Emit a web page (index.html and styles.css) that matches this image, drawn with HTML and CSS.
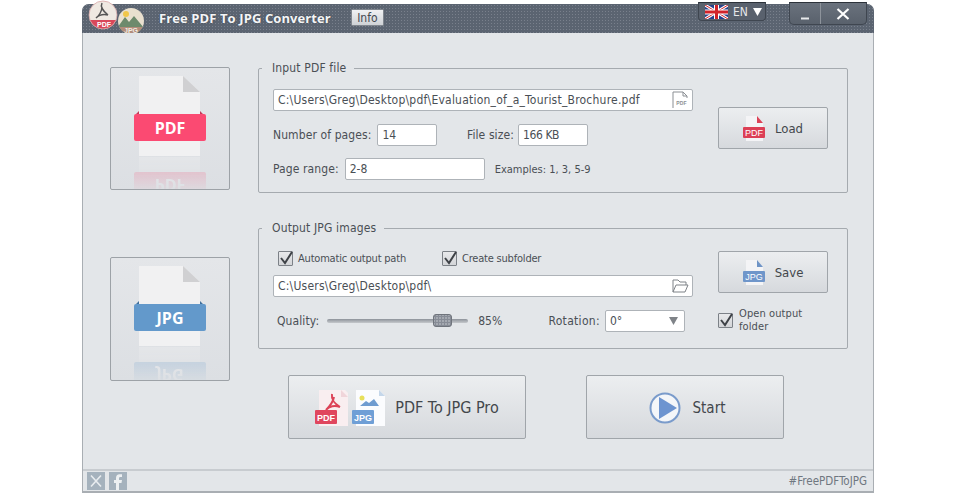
FILE: index.html
```html
<!DOCTYPE html>
<html lang="en">
<head>
<meta charset="utf-8">
<title>Free PDF To JPG Converter</title>
<link rel="stylesheet" href="styles.css">
</head>
<body>
<div class="window">
  <header class="titlebar">
    <svg class="logo" width="60" height="33" viewBox="0 0 60 33">
      <defs>
        <clipPath id="jpgDisc"><circle cx="43" cy="21" r="13"/></clipPath>
        <clipPath id="pdfDisc"><circle cx="15" cy="15" r="14"/></clipPath>
      </defs>
      <g clip-path="url(#jpgDisc)">
        <rect x="30" y="8" width="26" height="26" fill="#e9e0cf"/>
        <path d="M29 28l8-11 4 5 5-6 10 12v6H29z" fill="#6d8a6c"/>
        <circle cx="38" cy="14" r="3" fill="#f0c64a"/>
        <rect x="30" y="27" width="26" height="7" fill="#b28c7a"/>
        <text x="43" y="33" class="logo-jpg">JPG</text>
      </g>
      <circle cx="15" cy="15" r="14" fill="#efe9e2"/>
      <g clip-path="url(#pdfDisc)">
        <rect x="0" y="20" width="30" height="10" fill="#d9475a"/>
        <text x="16" y="27" class="logo-pdf">PDF</text>
      </g>
      <path d="M14 3c-2 4 1 8 6 12M20 15c-4-1-9 0-12 3M8 18c3-2 6-7 6-11" fill="none" stroke="#555" stroke-width="1.500"/>
      <circle cx="15" cy="15" r="14" fill="none" stroke="#d8a8a8" stroke-width=".8"/>
    </svg>
    <h1 class="app-title">Free PDF To JPG Converter</h1>
    <button class="info-btn">Info</button>
    <div class="lang">
      <svg width="23" height="14" viewBox="0 0 23 14">
        <rect width="23" height="14" fill="#27408b"/>
        <path d="M0 0l23 14M23 0L0 14" stroke="#fff" stroke-width="3"/>
        <path d="M0 0l23 14M23 0L0 14" stroke="#d2232a" stroke-width="1"/>
        <path d="M11.5 0v14M0 7h23" stroke="#fff" stroke-width="5"/>
        <path d="M11.5 0v14M0 7h23" stroke="#d2232a" stroke-width="3"/>
      </svg>
      <span>EN</span>
      <svg width="9" height="8" viewBox="0 0 9 8"><path d="M0 0h9L4.500 8z" fill="#fff"/></svg>
    </div>
    <div class="win-controls">
      <div class="win-btn">
        <svg width="12" height="12" viewBox="0 0 12 12"><path d="M2 10.500h8" stroke="#e8eaec" stroke-width="2"/></svg>
      </div>
      <div class="win-btn win-close">
        <svg width="14" height="12" viewBox="0 0 14 12"><path d="M1.500 1l11 10M12.500 1l-11 10" stroke="#fff" stroke-width="2.200"/></svg>
      </div>
    </div>
  </header>

  <main class="main">
    <div class="tiles">
      <div class="tile tile-first">
        <svg width="118" height="121" viewBox="0 0 118 121">
          <defs>
            <linearGradient id="fadeA" x1="0" y1="89" x2="0" y2="121" gradientUnits="userSpaceOnUse">
              <stop offset="0" stop-color="#fff" stop-opacity=".32"/>
              <stop offset="1" stop-color="#fff" stop-opacity=".04"/>
            </linearGradient>
            <mask id="maskA" maskUnits="userSpaceOnUse" x="0" y="89" width="118" height="32"><rect y="89" width="118" height="32" fill="url(#fadeA)"/></mask>
            <g id="docA">
              <path d="M28 8h44l17 16v64H28z" fill="#f1f1f2"/>
              <path d="M72 8l17 16H72z" fill="#d0d0d2"/>
              <path d="M25 46l3-3v5zM92 46l-3-3v5z" fill="#c23a58"/>
              <rect x="23" y="46" width="72" height="27" rx="2" fill="#fb4a72"/>
              <text x="59" y="66" class="tile-label">PDF</text>
            </g>
          </defs>
          <use href="#docA"/>
          <g mask="url(#maskA)"><use href="#docA" transform="translate(0 177) scale(1 -1)"/></g>
        </svg>
      </div>
      <div class="tile tile-second">
        <svg width="118" height="122" viewBox="0 0 118 122">
          <defs>
            <linearGradient id="fadeB" x1="0" y1="89" x2="0" y2="122" gradientUnits="userSpaceOnUse">
              <stop offset="0" stop-color="#fff" stop-opacity=".32"/>
              <stop offset="1" stop-color="#fff" stop-opacity=".04"/>
            </linearGradient>
            <mask id="maskB" maskUnits="userSpaceOnUse" x="0" y="89" width="118" height="33"><rect y="89" width="118" height="33" fill="url(#fadeB)"/></mask>
            <g id="docB">
              <path d="M28 8h44l17 16v64H28z" fill="#f1f1f2"/>
              <path d="M72 8l17 16H72z" fill="#d0d0d2"/>
              <path d="M25 46l3-3v5zM92 46l-3-3v5z" fill="#3f6f9c"/>
              <rect x="23" y="46" width="72" height="27" rx="2" fill="#6399cb"/>
              <text x="59" y="66" class="tile-label">JPG</text>
            </g>
          </defs>
          <use href="#docB"/>
          <g mask="url(#maskB)"><use href="#docB" transform="translate(0 177) scale(1 -1)"/></g>
        </svg>
      </div>
    </div>

    <div class="content">
      <fieldset class="group group-input">
        <legend>Input PDF file</legend>
        <div class="group-body">
          <div class="form">
            <div class="field field-wide">
              <span class="field-text">C:\Users\Greg\Desktop\pdf\Evaluation_of_a_Tourist_Brochure.pdf</span>
              <svg width="17" height="18" viewBox="0 0 17 18"><path d="M1 17V1h10l4 4v2M11 1v4h4" fill="none" stroke="#8b8f94"/><text x="9.500" y="14" class="mini-pdf">PDF</text></svg>
            </div>
            <div class="form-row row-stats">
              <span class="lbl">Number of pages:</span>
              <div class="field field-pages">14</div>
              <span class="lbl lbl-size">File size:</span>
              <div class="field field-size">166 KB</div>
            </div>
            <div class="form-row row-range">
              <span class="lbl">Page range:</span>
              <div class="field field-range">2-8</div>
              <span class="hint">Examples: 1, 3, 5-9</span>
            </div>
          </div>
          <button class="btn btn-side btn-load">
            <svg width="22" height="25" viewBox="0 0 22 25"><path d="M3 0h11l6 7v18H3z" fill="#f4f4f6"/><path d="M14 0l6 7h-6z" fill="#dc4257"/><rect y="11" width="22" height="11" rx="1" fill="#dc3f55"/><text x="11" y="20" class="mini-band">PDF</text></svg>
            <span>Load</span>
          </button>
        </div>
      </fieldset>

      <fieldset class="group group-output">
        <legend>Output JPG images</legend>
        <div class="group-body">
          <div class="form">
            <div class="form-row row-checks">
              <span class="check"><svg width="15" height="15" viewBox="0 0 15 15"><path d="M3 7l4 5 7-11" fill="none" stroke="#3e4247" stroke-width="2"/></svg></span>
              <span class="lbl">Automatic output path</span>
              <span class="check check-second"><svg width="15" height="15" viewBox="0 0 15 15"><path d="M3 7l4 5 7-11" fill="none" stroke="#3e4247" stroke-width="2"/></svg></span>
              <span class="lbl">Create subfolder</span>
            </div>
            <div class="field field-wide">
              <span class="field-text">C:\Users\Greg\Desktop\pdf\</span>
              <svg width="17" height="14" viewBox="0 0 17 14"><path d="M1 13V1h5l2 2h6v3M1 13l3-7h12l-3 7z" fill="none" stroke="#7f8388"/></svg>
            </div>
            <div class="form-row row-quality">
              <span class="lbl">Quality:</span>
              <div class="slider"><div class="slider-thumb"></div></div>
              <span class="lbl pct">85%</span>
              <span class="lbl lbl-rotation">Rotation:</span>
              <div class="field field-rotation"><span>0°</span><svg width="9" height="8" viewBox="0 0 9 8"><path d="M0 0h9L4.500 8z" fill="#7f8388"/></svg></div>
            </div>
          </div>
          <div class="side">
            <button class="btn btn-side btn-save">
              <svg width="22" height="25" viewBox="0 0 22 25"><path d="M3 0h11l6 7v18H3z" fill="#f4f4f6"/><path d="M14 0l6 7h-6z" fill="#6f94c6"/><rect y="11" width="22" height="11" rx="1" fill="#6f96ca"/><text x="11" y="20" class="mini-band">JPG</text></svg>
              <span>Save</span>
            </button>
            <div class="open-folder">
              <span class="check"><svg width="15" height="15" viewBox="0 0 15 15"><path d="M3 7l4 5 7-11" fill="none" stroke="#3e4247" stroke-width="2"/></svg></span>
              <span class="lbl">Open output folder</span>
            </div>
          </div>
        </div>
      </fieldset>

      <div class="actions">
        <button class="btn btn-pro">
          <svg width="72" height="38" viewBox="0 0 72 38">
            <path d="M4 1h26l3 3v33H4z" fill="#f9eef0"/>
            <path d="M26 1l7 7h-7z" fill="#f0d5da"/>
            <path d="M17 5c-1 5 3 10 8 13M25 18c-5-2-11-1-14 3M11 21c3-3 7-8 8-13" fill="none" stroke="#dc4257" stroke-width="2"/>
            <rect y="21" width="22" height="14" rx="1" fill="#e0465e"/>
            <text x="11" y="32" class="mini-band pro-band">PDF</text>
            <path d="M41 1h23l6 6v30H41z" fill="#fbfcfe"/>
            <path d="M64 1l6 6h-6z" fill="#c5d7ea"/>
            <circle cx="47" cy="9" r="2.500" fill="#e7df5a"/>
            <path d="M45 17l6-5 3 2 5-4 5 7z" fill="#6f9cd0"/>
            <rect x="37" y="21" width="22" height="14" rx="1" fill="#6f9fd6"/>
            <text x="48" y="32" class="mini-band pro-band">JPG</text>
          </svg>
          <span>PDF To JPG Pro</span>
        </button>
        <button class="btn btn-start">
          <svg width="32" height="32" viewBox="0 0 32 32"><circle cx="16" cy="16" r="14.500" fill="#f4f6f9" stroke="#7a9bcb" stroke-width="2"/><path d="M10 5l18 11-18 11z" fill="#6d94d0"/></svg>
          <span>Start</span>
        </button>
      </div>
    </div>
  </main>

  <footer class="footer">
    <div class="social">
      <svg class="social-icon" width="18" height="18" viewBox="0 0 18 18"><rect width="18" height="18" fill="#a5b2bd"/><path d="M4 3.500l10 11M14 3.500l-10 11" stroke="#e8ecef" stroke-width="1.600"/></svg>
      <svg class="social-icon" width="18" height="18" viewBox="0 0 18 18"><rect width="18" height="18" fill="#a5b2bd"/><path d="M10 18v-7h2.500l.5-3h-3V6.500c0-1 .4-1.500 1.500-1.500H13V2.300h-2.500C8.300 2.300 7 3.700 7 6v2H5v3h2v7z" fill="#edf0f2"/></svg>
    </div>
    <span class="hashtag">#FreePDFToJPG</span>
  </footer>
</div>
</body>
</html>
```
FILE: styles.css
```css
* { box-sizing: border-box; }
html, body { margin: 0; padding: 0; background: #fff; }
body {
  font-family: "DejaVu Sans", "Liberation Sans", sans-serif;
  font-stretch: condensed;
  font-size: 12px;
  color: #4a4f55;
  height: 498px;
  overflow: hidden;
}
.window {
  margin: 4px 0 0 82px;
  width: 792px;
  height: 489px;
  display: flex;
  flex-direction: column;
  background: #e3e6e9;
  border: 1px solid #a9aeb3;
  border-top: 0;
  border-radius: 7px 7px 0 0;
}
.titlebar {
  height: 29px;
  margin: 0 -1px;
  display: flex;
  align-items: center;
  border-radius: 7px 7px 0 0;
  background-color: #5b6471;
  background-image: radial-gradient(circle at 1.500px 1.500px, #79808c .8px, transparent 1px);
  background-size: 3px 3px;
}
.logo { margin: -4px 0 0 6px; align-self: flex-start; flex: none; }
.logo-jpg { font: bold 7px "Liberation Sans", sans-serif; fill: #f1ece4; text-anchor: middle; }
.logo-pdf { font: bold 7px "Liberation Sans", sans-serif; fill: #fff; text-anchor: middle; }
.app-title {
  margin: -2px 0 0 11px;
  font: bold 13px "Open Sans", "Liberation Sans", sans-serif;
  letter-spacing: .1px;
  color: #f4f5f6;
  text-shadow: 0 0 2px #3c434d;
  white-space: nowrap;
}
.info-btn {
  margin: -2px 0 0 20px;
  width: 33px;
  height: 17px;
  padding: 0;
  font: inherit;
  font-stretch: condensed;
  font-size: 12px;
  color: #454a50;
  background: linear-gradient(#f0f1f3, #cfd2d6);
  border: 1px solid #80868e;
  border-radius: 1px;
}
.lang {
  align-self: flex-start;
  margin: -2px 0 0 314px;
  width: 68px;
  height: 19px;
  display: flex;
  align-items: center;
  gap: 5px;
  padding-left: 6px;
  color: #e6e8ea;
  background: #59616d;
  border: 1px solid #3f4650;
  border-top-color: #2c323a;
  border-radius: 0 0 4px 4px;
  font-size: 12px;
}
.win-controls {
  align-self: flex-start;
  margin: -2px 0 0 23px;
  width: 78px;
  height: 23px;
  display: flex;
  background: linear-gradient(#6a727d, #59616c);
  border: 1px solid #3f4650;
  border-top-color: #2c323a;
  border-radius: 0 0 5px 5px;
}
.win-btn { width: 31px; display: flex; align-items: center; justify-content: center; border-right: 1px solid #8d939b; }
.win-close { flex: 1; border-right: 0; }

.main { flex: 1; display: flex; gap: 28px; padding-left: 27px; min-height: 0; }
.tiles { display: flex; flex-direction: column; width: 120px; }
.tile {
  width: 120px;
  height: 123px;
  background: linear-gradient(#e4e6e9, #dcdfe3);
  border: 1px solid #9da2a7;
  border-radius: 2px;
  overflow: hidden;
}
.tile svg { display: block; }
.tile-first { margin-top: 34px; }
.tile-second { margin-top: 67px; height: 124px; }
.tile-label { font: bold 16px "Open Sans", "Liberation Sans", sans-serif; fill: #fff; text-anchor: middle; }

.content { width: 590px; display: flex; flex-direction: column; padding-top: 27px; }
.group {
  margin: 0;
  padding: 0;
  min-width: 0;
  border: 1px solid #a5aaaf;
  border-radius: 2px;
}
.group legend {
  margin-left: 3px;
  padding: 0 8px 0 10px;
  font-size: 12px;
  line-height: 16px;
  letter-spacing: .15px;
  color: #4a4f55;
}
.group-input { height: 133px; }
.group-output { height: 129px; margin-top: 27px; }
.group-body { display: flex; gap: 25px; padding: 13px 0 0 14px; }
.group-output .group-body { padding-top: 15px; }
.form { width: 420px; display: flex; flex-direction: column; }
.form-row { display: flex; align-items: center; }
.field {
  height: 22px;
  display: flex;
  align-items: center;
  padding-left: 4px;
  background: #fff;
  border: 1px solid #aeb3b8;
  border-radius: 2px;
  color: #4a4f55;
  white-space: nowrap;
}
.field-wide { width: 420px; justify-content: space-between; padding-right: 3px; letter-spacing: .22px; }
.field-wide svg { flex: none; }
.row-stats { margin-top: 13px; }
.row-range { margin-top: 12px; }
.field-pages { width: 60px; margin-left: 6px; }
.lbl-size { margin-left: 29.500px; }
.field-size { width: 70px; margin-left: 4px; letter-spacing: -.4px; }
.field-range { width: 140px; margin-left: 6px; }
.hint { margin-left: 10px; font-size: 11px; }
.lbl { white-space: nowrap; letter-spacing: .1px; }
.mini-pdf { font: bold 5px "Liberation Sans", sans-serif; fill: #8b8f94; text-anchor: middle; }
.mini-band { font: 9px "Liberation Sans", sans-serif; fill: #fff; text-anchor: middle; }
.pro-band { font-weight: bold; }

.row-checks { height: 14px; padding-left: 5px; }
.check {
  width: 15px;
  height: 15px;
  flex: none;
  background: linear-gradient(#e8e9eb, #d3d5d8);
  border: 1px solid #7c8187;
  border-radius: 1px;
}
.check svg { display: block; margin: -1px; }
.row-checks .lbl { margin-left: 5px; font-size: 11px; letter-spacing: -.2px; }
.check-second { margin-left: 36px; }
.group-output .field-wide { margin-top: 10px; }
.row-quality { margin-top: 13px; padding-left: 4px; }
.slider {
  width: 141px;
  height: 4px;
  margin-left: 8px;
  background: linear-gradient(#8d929a, #c5c8cc);
  border-radius: 2px;
  position: relative;
}
.slider-thumb {
  position: absolute;
  left: 106px;
  top: -5px;
  width: 19px;
  height: 13px;
  border-radius: 3px;
  border: 1px solid #6f747c;
  background-color: #878c96;
  background-image: radial-gradient(circle at 1px 1px, #e6e8ea .5px, transparent .8px);
  background-size: 3px 3px;
  background-position: 2px 2px;
}
.pct { margin-left: 10px; }
.lbl-rotation { margin-left: 46px; letter-spacing: .3px; }
.field-rotation { width: 80px; margin-left: 5px; justify-content: space-between; padding-right: 6px; }

.side { width: 110px; display: flex; flex-direction: column; }
.btn {
  display: flex;
  align-items: center;
  justify-content: center;
  padding: 0;
  font: inherit;
  font-stretch: condensed;
  color: #43474c;
  background: linear-gradient(#eceef0, #d6d9dd);
  border: 1px solid #a0a5aa;
  border-radius: 2px;
}
.btn-side { width: 110px; height: 42px; gap: 10px; font-size: 13px; }
.btn-load { margin-top: 18px; }
.open-folder { display: flex; gap: 6px; margin-top: 20px; line-height: 13px; font-size: 11px; }
.open-folder .lbl { white-space: normal; width: 70px; margin-top: -6px; }

.actions { display: flex; gap: 60px; margin-top: 26px; padding-left: 30px; }
.btn-pro { width: 238px; height: 64px; gap: 8px; font-size: 16px; padding: 1px 0 0 0; }
.btn-start { width: 198px; height: 64px; gap: 12px; font-size: 15px; padding: 1px 0 0 4px; }

.footer {
  height: 23px;
  flex: none;
  display: flex;
  align-items: center;
  justify-content: space-between;
  padding: 0 6px 0 4px;
  border-top: 2px solid #c8ccd0;
  border-bottom: 1px solid #a9aeb3;
}
.social { display: flex; gap: 4px; }
.social-icon { display: block; }
.hashtag { font-size: 11.500px; color: #6f7780; }
```
